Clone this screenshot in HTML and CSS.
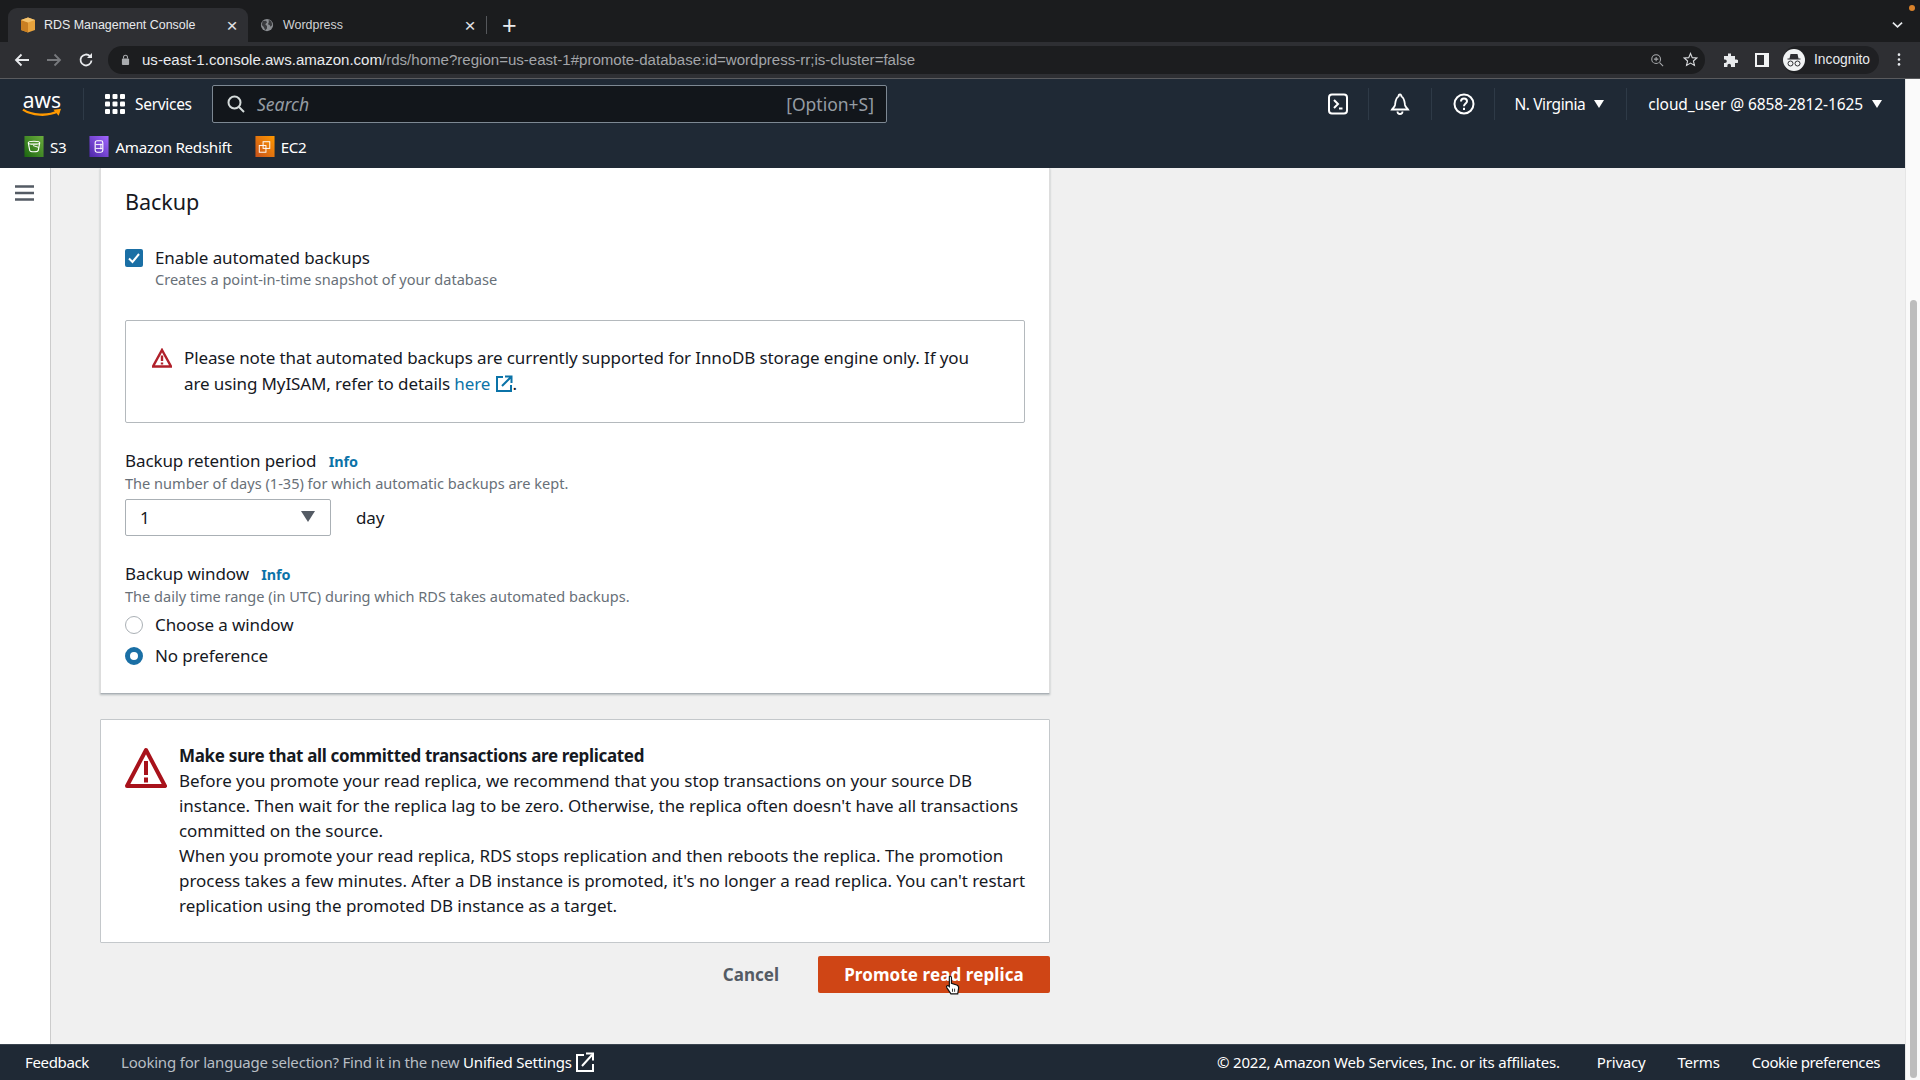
FILE: index.html
```html
<!DOCTYPE html>
<html lang="en">
  <head>
    <meta charset="UTF-8" />
    <title>RDS Management Console</title>
    <link rel="stylesheet" href="styles.css">
  </head>
  <body>
    <div class="tabstrip">
      <div class="tab tab-active">
        <svg class="favicon" viewBox="0 0 16 16"><path d="M8 0.5 15 3v10l-7 2.5L1 13V3z" fill="#e8a33d"/><path d="M8 5.5v10L1 13V3z" fill="#c97f22"/><path d="M8 0.5 15 3 8 5.5 1 3z" fill="#f4c36f"/></svg>
        <span class="tab-title">RDS Management Console</span>
        <span class="tab-close">×</span>
      </div>
      <div class="tab">
        <svg class="favicon globe" viewBox="0 0 16 16"><circle cx="8" cy="8" r="7" fill="#8a8d91"/><path d="M3 3.5 7 3l1 2-2 2 2 2v3l-2 2-2-4-2-2zM10 2l3 2 1 4-2 2-1-2-2-1 1-2z" fill="#3a3b3e"/></svg>
        <span class="tab-title">Wordpress</span>
        <span class="tab-close">×</span>
      </div>
      <span class="tab-sep"></span>
      <span class="tab-new">+</span>
      <span class="tab-spacer"></span>
      <div class="strip-end">
        <span class="rec-dot"></span>
        <svg class="chev" viewBox="0 0 12 8"><path d="M1 1.5 6 6l5-4.5" fill="none" stroke="#e8eaed" stroke-width="1.8"/></svg>
      </div>
    </div>

    <div class="toolbar">
      <svg class="tool" viewBox="0 0 16 16"><path d="M15 8H2M7.5 2.5 2 8l5.500 5.500" fill="none" stroke="#e8eaed" stroke-width="1.8"/></svg>
      <svg class="tool" viewBox="0 0 16 16"><path d="M1 8h13M8.500 2.500 14 8l-5.500 5.500" fill="none" stroke="#77797d" stroke-width="1.8"/></svg>
      <svg class="tool" viewBox="0 0 16 16"><path d="M13.500 8.500A5.500 5.500 0 1 1 12 4.200" fill="none" stroke="#e8eaed" stroke-width="1.8"/><path d="M14 1v5H9z" fill="#e8eaed"/></svg>
      <div class="omnibox">
        <svg class="lock" viewBox="0 0 10 12"><rect x="1" y="5" width="8" height="7" rx="1" fill="#a9abae"/><path d="M2.800 5V3.500a2.200 2.200 0 0 1 4.400 0V5" fill="none" stroke="#a9abae" stroke-width="1.200"/></svg>
        <span class="url"><span class="url-host">us-east-1.console.aws.amazon.com</span>/rds/home?region=us-east-1#promote-database:id=wordpress-rr;is-cluster=false</span>
        <span class="tab-spacer"></span>
        <svg class="omni-icon" viewBox="0 0 16 16"><circle cx="7" cy="7" r="5" fill="none" stroke="#a9abae" stroke-width="1.200"/><path d="M11 11l4 4M7 4.500v5M4.500 7h5" stroke="#a9abae" stroke-width="1.200"/></svg>
        <svg class="omni-icon star" viewBox="0 0 16 16"><path d="M8 1.500 9.900 6l4.800.4-3.600 3.200 1.100 4.700L8 11.800l-4.200 2.500 1.100-4.700L1.300 6.400 6.100 6z" fill="none" stroke="#d5d7da" stroke-width="1.200"/></svg>
      </div>
      <div class="tool-right">
        <svg class="ext" viewBox="0 0 16 16"><path d="M6 1.500h3V4h4v3.500h1.500a1.800 1.800 0 0 1 0 3.600H13V15H9v-1.500a1.800 1.800 0 0 0-3.600 0V15H2v-4h1a1.800 1.800 0 0 0 0-3.600H2V4h4z" fill="#e8eaed"/></svg>
        <svg class="panel" viewBox="0 0 14 14"><rect width="14" height="14" fill="#f1f3f4"/><rect x="2" y="2" width="7" height="10" fill="#2e2f33"/></svg>
        <div class="profile">
          <svg class="avatar" viewBox="0 0 22 22"><circle cx="11" cy="11" r="11" fill="#f1f3f4"/><path d="M7.500 5h7l1 4.500h2v1h-13v-1h2z" fill="#2e2f33"/><circle cx="7.500" cy="14.500" r="2.500" fill="none" stroke="#2e2f33"/><circle cx="14.500" cy="14.500" r="2.500" fill="none" stroke="#2e2f33"/></svg>
          <span class="profile-name">Incognito</span>
        </div>
        <svg class="dots" viewBox="0 0 4 16"><circle cx="2" cy="2" r="1.600" fill="#e8eaed"/><circle cx="2" cy="8" r="1.600" fill="#e8eaed"/><circle cx="2" cy="14" r="1.600" fill="#e8eaed"/></svg>
      </div>
    </div>

    <div class="viewport">
      <div class="console">
        <header class="nav">
          <div class="nav-top">
            <div class="logo">
              <span class="logo-word">aws</span>
              <svg class="logo-smile" viewBox="0 0 42 10"><path d="M1 1.500C10 7.500 27 9 38 3" fill="none" stroke="#f90" stroke-width="2.400"/><path d="M33 1.500 41 .5 38.500 8z" fill="#f90"/></svg>
            </div>
            <span class="nav-sep logo-sep"></span>
            <svg class="grid-icon" viewBox="0 0 20 20">
              <rect width="5" height="5" rx="1"/><rect x="7.500" width="5" height="5" rx="1"/><rect x="15" width="5" height="5" rx="1"/>
              <rect y="7.500" width="5" height="5" rx="1"/><rect x="7.500" y="7.500" width="5" height="5" rx="1"/><rect x="15" y="7.500" width="5" height="5" rx="1"/>
              <rect y="15" width="5" height="5" rx="1"/><rect x="7.500" y="15" width="5" height="5" rx="1"/><rect x="15" y="15" width="5" height="5" rx="1"/>
            </svg>
            <span class="services">Services</span>
            <div class="search">
              <svg class="search-icon" viewBox="0 0 18 18"><circle cx="7.500" cy="7.500" r="6" fill="none" stroke="#d5dbdb" stroke-width="2"/><path d="M12 12l5 5" stroke="#d5dbdb" stroke-width="2"/></svg>
              <span class="search-text">Search</span>
              <span class="search-key">[Option+S]</span>
            </div>
            <div class="nav-right">
              <svg class="nav-icon shell" viewBox="0 0 22 22"><rect x="2" y="1.500" width="18" height="19" rx="3" fill="none" stroke="#fff" stroke-width="2"/><path d="M7 7l4 4-4 4M12 15.500h3.500" fill="none" stroke="#fff" stroke-width="2"/></svg>
              <span class="nav-sep"></span>
              <svg class="nav-icon bell" viewBox="0 0 22 22"><path d="M11 1.500c-1 0-1.500 1-1.500 2C6.500 5 6.500 9 6 12c-.4 2-2 3-3 4.500h16C18 15 16.400 14 16 12c-.5-3-.5-7-3.500-8.500 0-1-.5-2-1.500-2z" fill="none" stroke="#fff" stroke-width="1.800"/><path d="M8.500 18.500a2.500 2.500 0 0 0 5 0" fill="none" stroke="#fff" stroke-width="1.800"/></svg>
              <span class="nav-sep"></span>
              <span class="help-wrap"><svg class="nav-icon help" viewBox="0 0 22 22"><circle cx="11" cy="11" r="9.500" fill="none" stroke="#fff" stroke-width="2"/><path d="M8 8.500C8 6.500 9.500 5.500 11 5.500s3 1 3 2.800c0 2.200-3 2.500-3 5" fill="none" stroke="#fff" stroke-width="2"/><rect x="10" y="14.800" width="2" height="2.200" fill="#fff"/></svg></span>
              <span class="nav-sep"></span>
              <span class="nav-menu region">N. Virginia <i class="caret"></i></span>
              <span class="nav-sep"></span>
              <span class="nav-menu account">cloud_user @ 6858-2812-1625 <i class="caret"></i></span>
            </div>
          </div>
          <div class="nav-fav">
            <span class="fav">
              <svg class="fav-icon" viewBox="0 0 20 22"><defs><linearGradient id="gGreen" x1="0" y1="1" x2="1" y2="0"><stop offset="0" stop-color="#1b660f"/><stop offset="1" stop-color="#6cae3e"/></linearGradient></defs><rect width="20" height="22" fill="url(#gGreen)"/><path d="M4 7c0-2 12-2 12 0l-1.500 8c-.5 2-8.500 2-9 0zM4 7c0 2 12 2 12 0" fill="none" stroke="#fff" stroke-width="1.200"/><path d="M9 10l6 2" stroke="#fff"/></svg>
              S3
            </span>
            <span class="fav">
              <svg class="fav-icon" viewBox="0 0 20 22"><defs><linearGradient id="gPurple" x1="0" y1="1" x2="1" y2="0"><stop offset="0" stop-color="#4d27a8"/><stop offset="1" stop-color="#a166ff"/></linearGradient></defs><rect width="20" height="22" fill="url(#gPurple)"/><rect x="6" y="5" width="8" height="12" rx="2" fill="none" stroke="#fff" stroke-width="1.200"/><path d="M6.500 9h7M6.500 13h7M12 8v6" stroke="#fff"/></svg>
              Amazon Redshift
            </span>
            <span class="fav">
              <svg class="fav-icon" viewBox="0 0 20 22"><defs><linearGradient id="gOrange" x1="0" y1="1" x2="1" y2="0"><stop offset="0" stop-color="#c8511b"/><stop offset="1" stop-color="#f90"/></linearGradient></defs><rect width="20" height="22" fill="url(#gOrange)"/><rect x="4" y="10" width="7" height="7" fill="none" stroke="#fff"/><rect x="8" y="6" width="7" height="7" fill="none" stroke="#fff"/></svg>
              EC2
            </span>
          </div>
        </header>

        <div class="content">
          <aside class="sidebar">
            <svg class="burger" viewBox="0 0 19 16"><path d="M0 1.500h19M0 8h19M0 14.500h19" stroke="#545b64" stroke-width="2.400"/></svg>
          </aside>
          <main class="main">
            <section class="card">
              <h2 class="card-title">Backup</h2>
              <div class="check-row">
                <span class="checkbox"><svg viewBox="0 0 18 18"><path d="M4 9.500 7.500 13 14 5" fill="none" stroke="#fff" stroke-width="2"/></svg></span>
                <span>Enable automated backups</span>
              </div>
              <p class="desc check-desc">Creates a point-in-time snapshot of your database</p>

              <div class="note">
                <svg class="note-icon" viewBox="0 0 20 20"><path d="M10 2 19 18.500H1z" fill="none" stroke="#b0202a" stroke-width="2.400"/><path d="M10 7.500v5.500M10 14.500v2" stroke="#b0202a" stroke-width="2.400"/></svg>
                <div class="note-text">
                  <p>Please note that automated backups are currently supported for InnoDB storage engine only. If you</p>
                  <p>are using MyISAM, refer to details <a class="link">here</a> <svg class="ext-link" viewBox="0 0 18 18"><path d="M8 2H2v14h14v-6" fill="none" stroke="currentColor" stroke-width="2"/><path d="M7 11 16 2M10 1.500h6.500V8" fill="none" stroke="currentColor" stroke-width="2"/></svg>.</p>
                </div>
              </div>

              <div class="field field-retention">
                <div class="field-label">Backup retention period <a class="info">Info</a></div>
                <p class="desc">The number of days (1-35) for which automatic backups are kept.</p>
                <div class="select-row">
                  <div class="select"><span>1</span><i class="select-caret"></i></div>
                  <span class="unit">day</span>
                </div>
              </div>

              <div class="field field-window">
                <div class="field-label">Backup window <a class="info">Info</a></div>
                <p class="desc">The daily time range (in UTC) during which RDS takes automated backups.</p>
                <div class="radio-row first"><span class="radio"></span><span>Choose a window</span></div>
                <div class="radio-row"><span class="radio on"></span><span>No preference</span></div>
              </div>
            </section>

            <section class="warning">
              <svg class="warning-icon" viewBox="0 0 42 42"><path d="M21 3 40 39H2z" fill="none" stroke="#a8121b" stroke-width="4" stroke-linejoin="round"/><path d="M21 14v14M21 30.500v5" stroke="#a8121b" stroke-width="4"/></svg>
              <div class="warning-text">
                <p class="warning-title">Make sure that all committed transactions are replicated</p>
                <p>Before you promote your read replica, we recommend that you stop transactions on your source DB instance. Then wait for the replica lag to be zero. Otherwise, the replica often doesn't have all transactions committed on the source.</p>
                <p>When you promote your read replica, RDS stops replication and then reboots the replica. The promotion process takes a few minutes. After a DB instance is promoted, it's no longer a read replica. You can't restart replication using the promoted DB instance as a target.</p>
              </div>
            </section>

            <div class="actions">
              <span class="btn-cancel">Cancel</span>
              <span class="btn-primary">Promote read replica
                <svg class="cursor" viewBox="0 0 14 20"><path d="M4 1.500c1-.8 2 0 2 1V8l5 1.500c1.500.5 2 1.500 1.800 3L12 18H5.500L1.500 12c-.8-1.500 1-2.500 2-1.500L4 11z" fill="#fff" stroke="#111" stroke-width="1.100"/><path d="M7 13v3M9 13v3" stroke="#111" stroke-width=".8"/></svg>
              </span>
            </div>
          </main>
        </div>

        <footer class="footer">
          <span class="foot-strong">Feedback</span>
          <span class="foot-lang">Looking for language selection? Find it in the new <b>Unified Settings</b></span>
          <svg class="foot-ext" viewBox="0 0 18 20"><path d="M8 3H1v16h16v-7" fill="none" stroke="#fff" stroke-width="2"/><path d="M6 14 16 3M10 1.500h7v7" fill="none" stroke="#fff" stroke-width="2"/></svg>
          <span class="tab-spacer"></span>
          <span class="foot-copy">© 2022, Amazon Web Services, Inc. or its affiliates.</span>
          <span class="foot-link foot-privacy">Privacy</span>
          <span class="foot-link">Terms</span>
          <span class="foot-link foot-cookie">Cookie preferences</span>
        </footer>
      </div>
      <div class="scrollbar"><div class="thumb"></div></div>
    </div>
  </body>
</html>
```

FILE: styles.css
```css
* {
  box-sizing: border-box;
}
html,
body {
  margin: 0;
  height: 1080px;
  overflow: hidden;
}
body {
  display: flex;
  flex-direction: column;
  width: 1920px;
  font-family: "Noto Sans", sans-serif;
  font-size: 17px;
  letter-spacing: -0.1px;
  color: #16191f;
  background-color: #f0f0f0;
}
p {
  margin: 0;
}

/* browser chrome */
.tabstrip {
  height: 42px;
  flex: none;
  display: flex;
  align-items: flex-end;
  padding-left: 8px;
  background-color: #1b1c1e;
  font-family: "Liberation Sans", sans-serif;
  letter-spacing: 0;
  color: #e8eaed;
}
.tab {
  width: 240px;
  height: 34px;
  display: flex;
  align-items: center;
  padding: 0 5px 0 12px;
  border-radius: 9px 9px 0 0;
  font-size: 12.45px;
}
.tab + .tab {
  width: 238px;
  color: #d0d2d5;
}
.tab-active {
  background-color: #2e2f33;
}
.favicon {
  width: 16px;
  height: 16px;
  margin-right: 8px;
}
.globe {
  width: 14px;
  height: 14px;
  margin-right: 9px;
}
.tab-title {
  flex: 1;
}
.tab-close {
  width: 22px;
  text-align: center;
  font-size: 19px;
  line-height: 19px;
  color: #e0e2e5;
}
.tab-sep {
  width: 1px;
  height: 18px;
  margin: 0 0 8px 0;
  background-color: #55575b;
}
.tab-new {
  margin: 0 0 4px 15px;
  font-size: 25px;
  line-height: 25px;
}
.tab-spacer {
  flex: 1;
}
.strip-end {
  width: 42px;
  height: 42px;
  position: relative;
}
.rec-dot {
  position: absolute;
  right: 5px;
  top: 5px;
  width: 6px;
  height: 6px;
  border-radius: 50%;
  background-color: #d9822b;
}
.chev {
  position: absolute;
  left: 14px;
  top: 21px;
  width: 11px;
  height: 8px;
}
.toolbar {
  height: 37px;
  flex: none;
  display: flex;
  align-items: center;
  padding: 0 0 1px 14px;
  background-color: #2e2f33;
  border-bottom: 1px solid #5a5b5e;
  font-family: "Liberation Sans", sans-serif;
  letter-spacing: 0;
}
.tool {
  width: 16px;
  height: 16px;
  margin-right: 16px;
}
.omnibox {
  margin-left: -2px;
  width: 1597px;
  height: 28px;
  display: flex;
  align-items: center;
  padding: 0 7px 0 13px;
  border-radius: 14px;
  background-color: #1c1d1f;
  font-size: 15.05px;
  color: #a3a5a9;
}
.lock {
  width: 9px;
  height: 11px;
  margin-right: 12px;
}
.url-host {
  color: #e8eaed;
}
.omni-icon {
  width: 14px;
  height: 14px;
  margin-left: 19px;
}
.star {
  width: 15px;
  height: 15px;
}
.tool-right {
  flex: 1;
  display: flex;
  align-items: center;
  padding-left: 17px;
}
.ext {
  width: 16px;
  height: 16px;
}
.panel {
  width: 14px;
  height: 14px;
  margin-left: 17px;
}
.profile {
  display: flex;
  align-items: center;
  height: 28px;
  margin-left: 14px;
  padding-right: 9px;
  border-radius: 14px;
  background-color: #1f2023;
  font-size: 13.8px;
  color: #e8eaed;
}
.avatar {
  width: 22px;
  height: 22px;
  margin-right: 9px;
}
.dots {
  width: 4px;
  height: 13px;
  margin-left: 18px;
}

/* console */
.viewport {
  flex: 1;
  display: flex;
  min-height: 0;
}
.console {
  width: 1905px;
  display: flex;
  flex-direction: column;
}
.scrollbar {
  flex: 1;
  padding: 221px 3px 2px 4px;
  background-color: #fafafa;
  border-left: 1px solid #e6e6e6;
}
.thumb {
  height: 100%;
  border-radius: 4px;
  background-color: #bdbdbd;
}
.nav {
  flex: none;
  height: 89px;
  background-color: #1f2935;
  color: #fff;
}
.nav-top {
  height: 50px;
  display: flex;
  align-items: center;
  padding-left: 22px;
}
.logo {
  width: 40px;
  display: flex;
  flex-direction: column;
  align-items: center;
}
.logo-word {
  font-size: 21px;
  line-height: 18px;
  letter-spacing: 0;
}
.logo-smile {
  width: 40px;
  height: 10px;
  margin-top: -1px;
}
.nav-sep {
  width: 1px;
  height: 32px;
  background-color: #2e3a47;
}
.logo-sep {
  margin-left: 21px;
}
.grid-icon {
  width: 20px;
  height: 20px;
  margin-left: 21px;
  fill: #fff;
}
.services {
  margin-left: 10px;
  width: 77px;
  font-size: 15.5px;
  letter-spacing: -0.3px;
}
.search {
  width: 675px;
  height: 38px;
  display: flex;
  align-items: center;
  padding: 0 12px 0 14px;
  border: 1px solid #7d8893;
  border-radius: 2px;
  background-color: #12161b;
  color: #959ca3;
  font-size: 17.5px;
  letter-spacing: 0;
}
.search-icon {
  width: 18px;
  height: 18px;
  margin-right: 12px;
}
.search-text {
  flex: 1;
  font-style: italic;
}
.nav-right {
  flex: 1;
  display: flex;
  align-items: center;
  justify-content: flex-end;
  padding-right: 23px;
  font-size: 15.5px;
  letter-spacing: -0.1px;
}
.nav-icon {
  width: 22px;
  height: 22px;
}
.shell {
  margin-right: 19px;
}
.bell {
  margin: 0 20px;
}
.help-wrap {
  display: flex;
  margin: 0 19px 0 21px;
}
.nav-menu {
  display: flex;
  align-items: center;
}
.region {
  margin: 0 22px 0 19px;
  letter-spacing: -0.4px;
}
.account {
  margin-left: 21px;
}
.caret {
  margin-left: 9px;
  width: 0;
  height: 0;
  border-left: 5px solid transparent;
  border-right: 5px solid transparent;
  border-top: 8px solid #fff;
}
.nav-fav {
  height: 37px;
  display: flex;
  align-items: center;
  padding: 0 0 2px 24px;
  font-size: 15.2px;
  letter-spacing: -0.3px;
  gap: 23px;
}
.fav {
  display: flex;
  align-items: center;
  gap: 6px;
}
.fav-icon {
  width: 20px;
  height: 21px;
}

.content {
  flex: 1;
  display: flex;
  min-height: 0;
  overflow: hidden;
}
.sidebar {
  width: 51px;
  flex: none;
  padding: 17px 0 0 15px;
  background-color: #fff;
  border-right: 1px solid #ccc;
}
.burger {
  display: block;
  width: 19px;
  height: 16px;
}
.main {
  width: 999px;
  padding-left: 49px;
}
.card {
  padding: 20px 20px 26px 24px;
  background-color: #fff;
  border-right: 1px solid #ddd;
  border-left: 1px solid #ddd;
  border-bottom: 1px solid #aab0b5;
  box-shadow: 0 1px 2px rgba(0, 28, 36, 0.25);
}
.card-title {
  margin: 0;
  font-size: 21.6px;
  font-weight: 400;
  line-height: 28px;
}
.check-row {
  display: flex;
  align-items: center;
  margin-top: 31px;
  line-height: 22px;
}
.checkbox {
  width: 18px;
  height: 18px;
  margin-right: 12px;
  border-radius: 2px;
  background-color: #1a6fa5;
}
.checkbox svg {
  display: block;
}
.desc {
  font-size: 14.55px;
  line-height: 20px;
  padding-bottom: 2px;
  letter-spacing: 0;
  color: #687078;
}
.check-desc {
  margin-left: 30px;
}
.note {
  display: flex;
  height: 103px;
  width: 900px;
  margin-top: 29px;
  padding: 24px 30px 0 26px;
  border: 1px solid #b4b9bd;
  border-radius: 2px;
  line-height: 26px;
  letter-spacing: -0.11px;
}
.note-icon {
  flex: none;
  width: 20px;
  height: 20px;
  margin: 3px 12px 0 0;
}
.link {
  color: #0b73a8;
}
.ext-link {
  width: 18px;
  height: 18px;
  vertical-align: -3px;
  color: #0b73a8;
}
.field-retention {
  margin-top: 27px;
}
.field-window {
  margin-top: 27px;
}
.field-label {
  line-height: 22px;
}
.info {
  margin-left: 8px;
  font-size: 14.4px;
  font-weight: 700;
  color: #0b73a8;
}
.select-row {
  display: flex;
  align-items: center;
  margin-top: 4px;
}
.select {
  width: 206px;
  height: 37px;
  display: flex;
  align-items: center;
  justify-content: space-between;
  padding: 0 15px 0 14px;
  border: 1px solid #aab0b5;
  border-radius: 2px;
}
.select-caret {
  width: 0;
  height: 0;
  margin-top: -3px;
  border-left: 7px solid transparent;
  border-right: 7px solid transparent;
  border-top: 11px solid #545b64;
}
.unit {
  margin-left: 25px;
}
.radio-row {
  display: flex;
  align-items: center;
  margin-top: 9px;
  line-height: 22px;
}
.radio-row.first {
  margin-top: 6px;
}
.radio {
  width: 18px;
  height: 18px;
  margin-right: 12px;
  border: 1px solid #aab0b5;
  border-radius: 50%;
}
.radio.on {
  border: 5px solid #1a6fa5;
}
.warning {
  display: flex;
  height: 224px;
  margin-top: 25px;
  padding: 23px 15px 0 24px;
  background-color: #fff;
  border: 1px solid #c4c8cb;
  border-radius: 1px;
  line-height: 25px;
  letter-spacing: -0.05px;
}
.warning-icon {
  flex: none;
  width: 42px;
  height: 42px;
  margin: 4px 12px 0 0;
}
.warning-title {
  font-weight: 700;
  letter-spacing: -0.33px;
}
.actions {
  display: flex;
  align-items: center;
  justify-content: flex-end;
  gap: 39px;
  margin-top: 13px;
}
.btn-cancel {
  font-weight: 700;
  letter-spacing: 0;
  color: #545b64;
}
.btn-primary {
  position: relative;
  width: 232px;
  height: 37px;
  display: flex;
  align-items: center;
  justify-content: center;
  border-radius: 2px;
  background-color: #cf4515;
  color: #fff;
  font-weight: 700;
  letter-spacing: 0.1px;
}
.cursor {
  position: absolute;
  left: 127px;
  top: 19px;
  width: 15px;
  height: 21px;
}

.footer {
  flex: none;
  height: 36px;
  display: flex;
  align-items: center;
  padding: 0 25px 2px;
  background-color: #1f2935;
  border-top: 1px solid #3a444f;
  font-size: 15px;
  letter-spacing: -0.2px;
  color: #fff;
}
.foot-strong {
  letter-spacing: -0.35px;
}
.foot-lang {
  margin-left: 32px;
  color: #b8bec4;
}
.foot-lang b {
  font-weight: 400;
  color: #fff;
}
.foot-ext {
  width: 18px;
  height: 20px;
  margin-left: 4px;
}
.foot-link {
  margin-left: 32px;
}
.foot-privacy {
  margin-left: 37px;
}
.foot-cookie {
  letter-spacing: -0.4px;
}
```
